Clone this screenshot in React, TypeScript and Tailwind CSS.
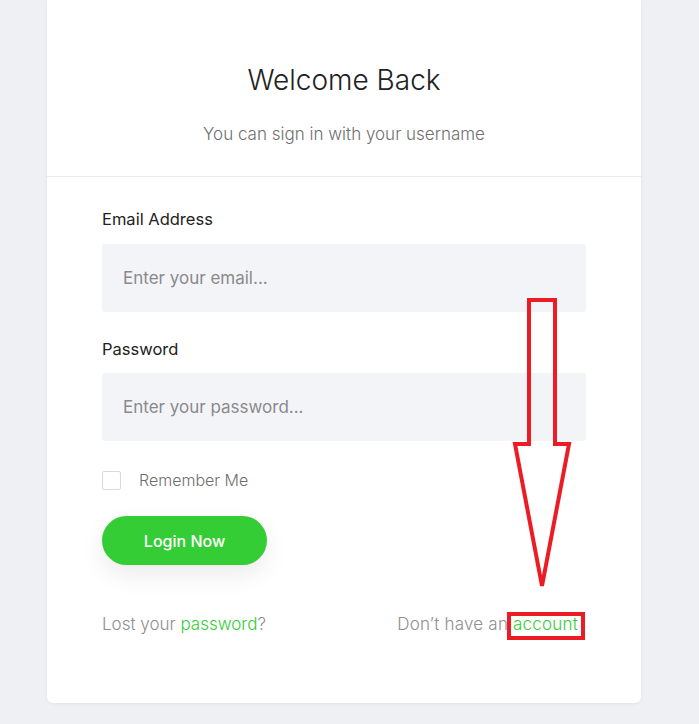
import { useState } from 'react'

const font = { fontFamily: 'Inter, "Noto Sans", sans-serif' }

export default function App() {
  const [remember, setRemember] = useState(false)

  return (
    <div className="relative min-h-[724px] w-full bg-[#eef0f4]" style={font}>
      <div className="ml-[47px] w-[594px] bg-white rounded-b-md shadow-[0_1px_3px_rgba(0,0,0,0.06)]">
        {/* Header */}
        <div className="flex flex-col items-center pt-[62px] pb-[30px] border-b border-[#e9ecef]">
          <h1 className="text-[28px] leading-[36px] font-light text-[#222]">Welcome Back</h1>
          <p className="mt-[24px] text-[17px] leading-[24px] font-light text-[#6f6f6f]">
            You can sign in with your username
          </p>
        </div>

        {/* Form */}
        <form className="px-[55px] pt-[30px] pb-[67px]" onSubmit={(e) => e.preventDefault()}>
          <label className="block text-[16.5px] leading-[24px] text-[#222]">Email Address</label>
          <input
            type="email"
            placeholder="Enter your email..."
            className="mt-[13px] block w-full h-[68px] rounded-[3px] bg-[#f3f4f8] px-[21px] text-[17px] text-[#333] placeholder:text-[#8a8a8a] outline-none"
          />

          <label className="mt-[25px] block text-[16.5px] leading-[24px] text-[#222]">Password</label>
          <input
            type="password"
            placeholder="Enter your password..."
            className="mt-[12px] block w-full h-[68px] rounded-[3px] bg-[#f3f4f8] px-[21px] text-[17px] text-[#333] placeholder:text-[#8a8a8a] outline-none"
          />

          <label className="mt-[29px] flex items-center gap-[18px] cursor-pointer">
            <span
              onClick={() => setRemember(!remember)}
              className="w-[19px] h-[19px] border border-[#d9d9d9] rounded-[2px] bg-white"
            />
            <span className="text-[16px] leading-[20px] font-light text-[#6f6f6f]">Remember Me</span>
          </label>

          <button
            type="submit"
            className="mt-[26px] w-[165px] h-[49px] rounded-full bg-[#34cd36] text-white text-[16px] font-medium shadow-[0_10px_24px_rgba(0,0,0,0.08)]"
          >
            Login Now
          </button>

          <div className="mt-[47px] flex items-center justify-between pr-[8px] text-[17px] leading-[24px] font-light text-[#8e8e8e]">
            <span>
              Lost your <a className="text-[#34cd36]">password</a>?
            </span>
            <span className="tracking-[0.2px]">
              Don&rsquo;t have an <a className="text-[#34cd36]">account</a>
            </span>
          </div>
        </form>
      </div>

      {/* Red annotation overlay */}
      <svg className="absolute left-0 top-0 pointer-events-none" width="699" height="724" viewBox="0 0 699 724">
        <polygon
          points="529,300 555,300 555,444 569,444 542,586 515,444 529,444"
          fill="none"
          stroke="#ed1c24"
          strokeWidth="4"
          strokeLinejoin="miter"
        />
        <rect x="509" y="614" width="74" height="24" fill="none" stroke="#ed1c24" strokeWidth="4" />
      </svg>
    </div>
  )
}
